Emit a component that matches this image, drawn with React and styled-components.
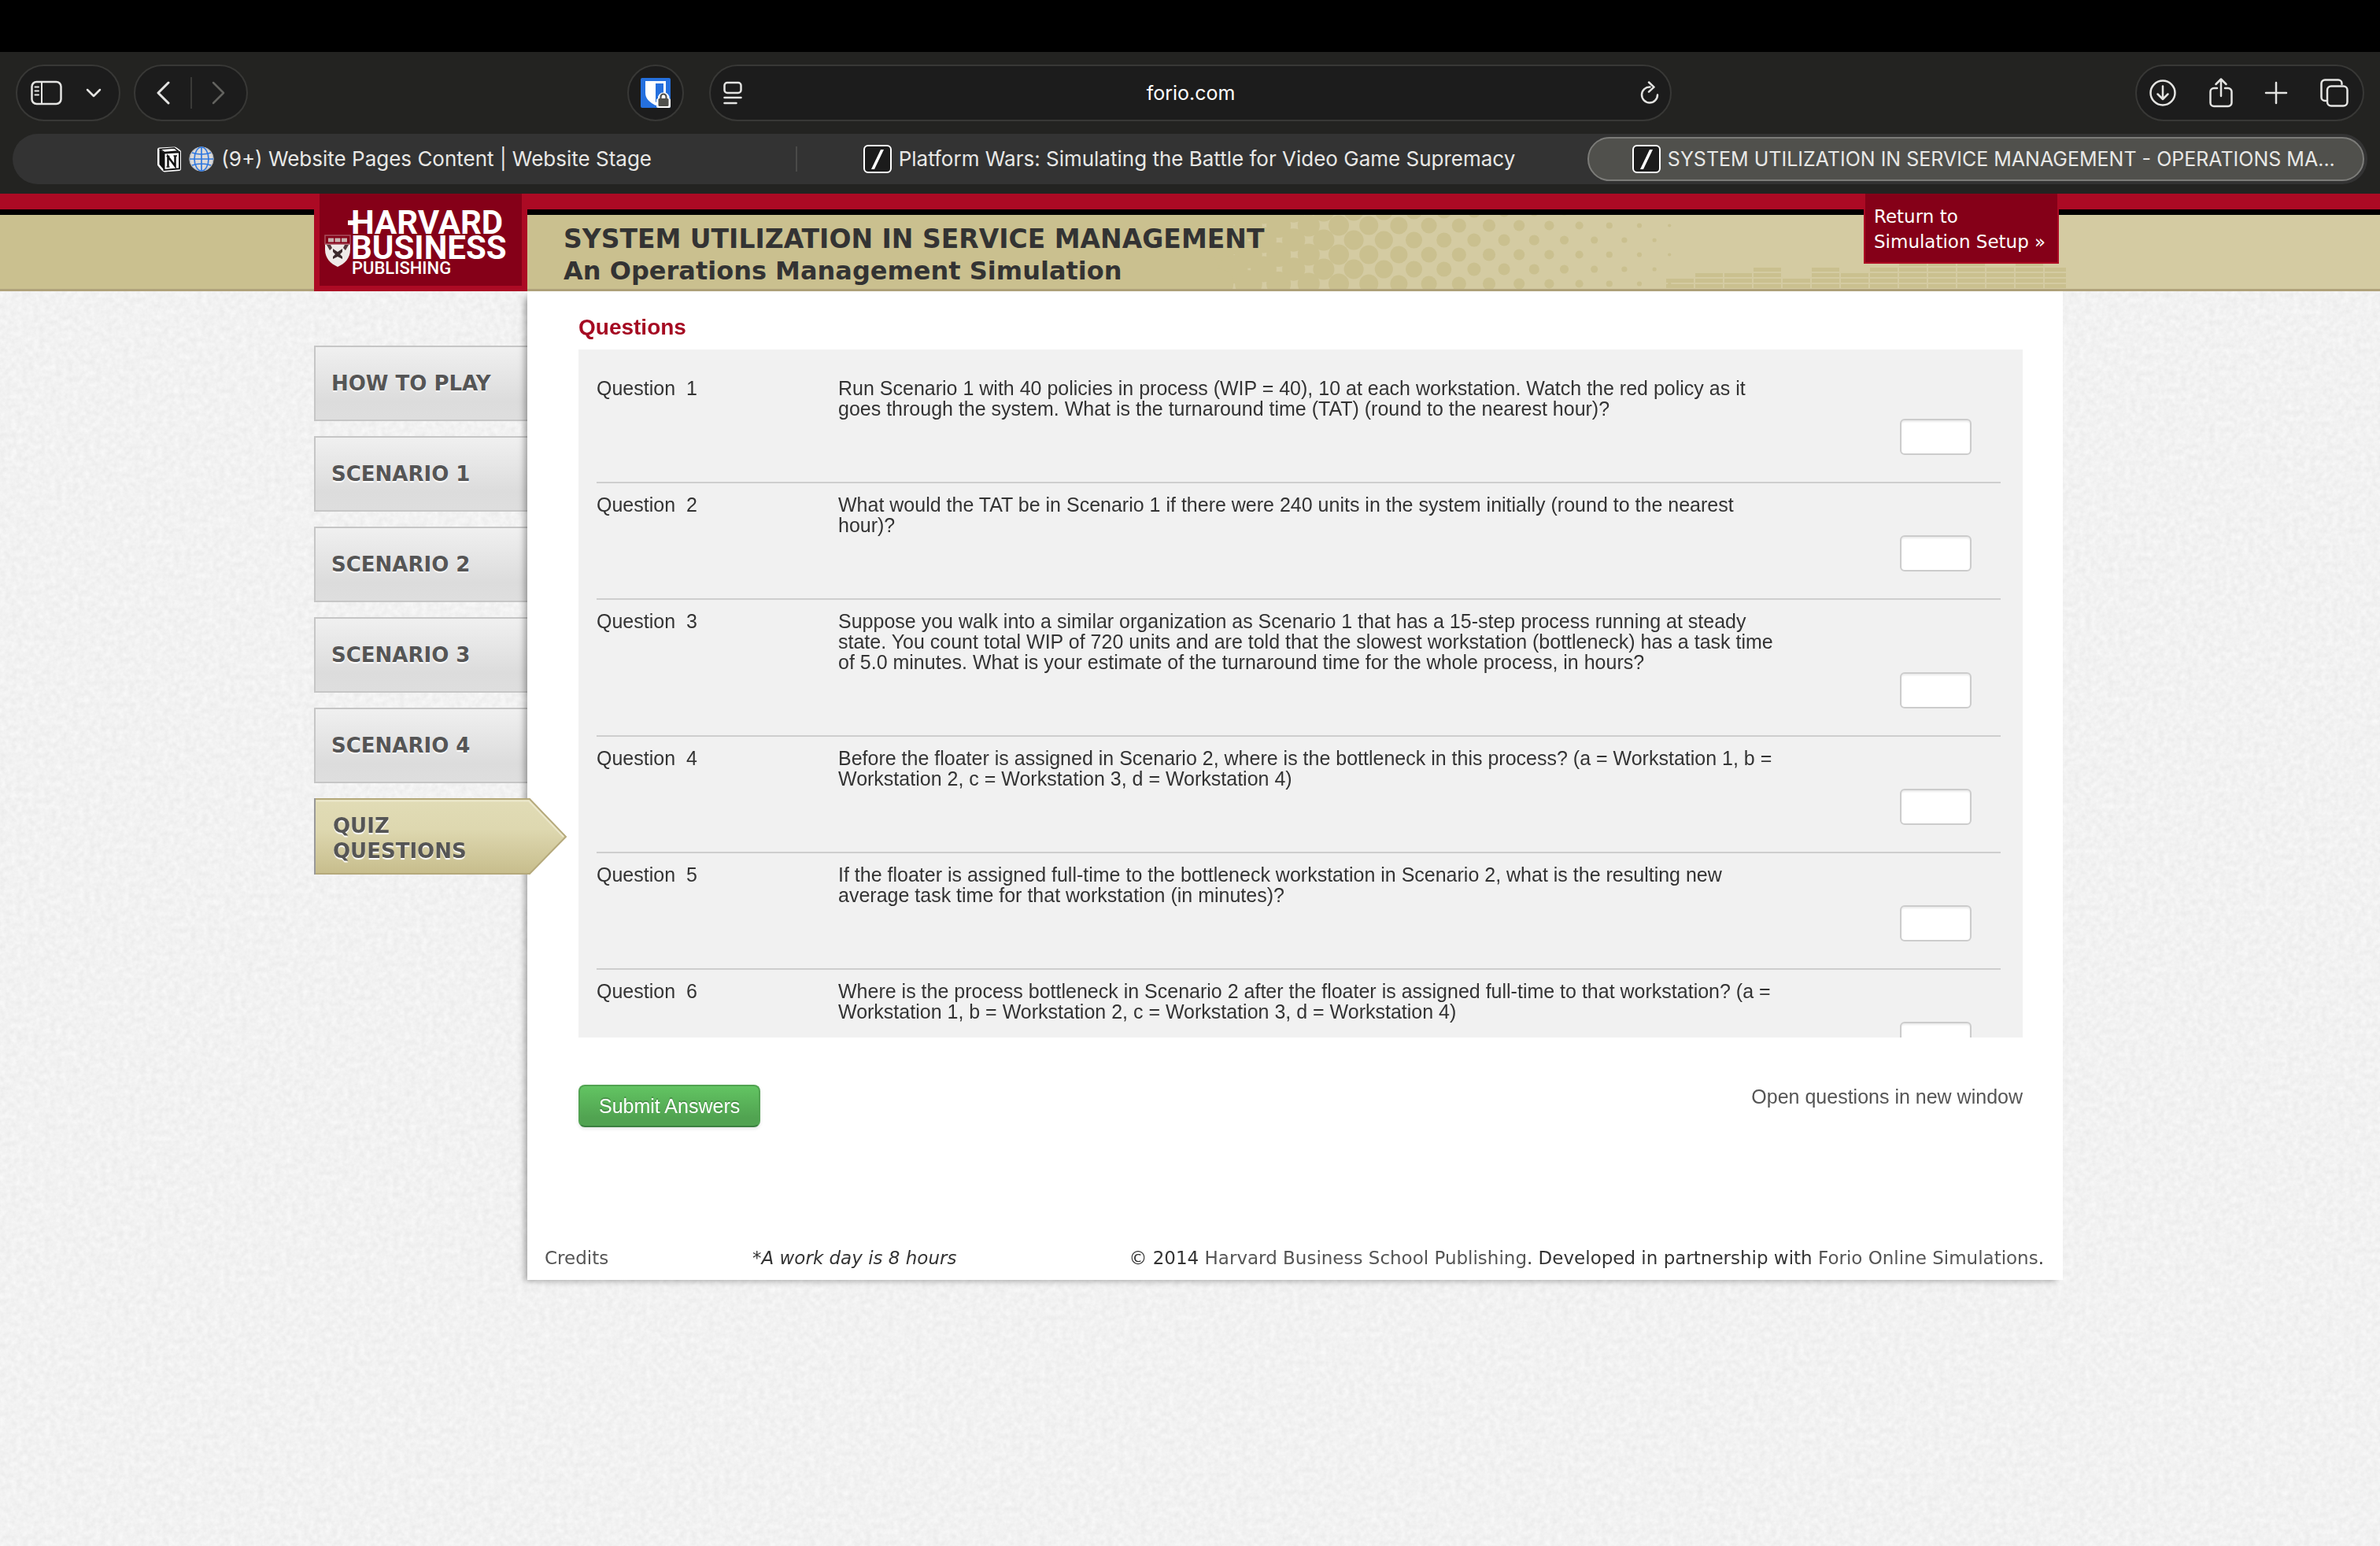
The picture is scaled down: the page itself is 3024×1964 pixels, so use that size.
import React, { useState } from "react";
import styled, { createGlobalStyle, css } from "styled-components";

const questions = [
  "Run Scenario 1 with 40 policies in process (WIP = 40), 10 at each workstation. Watch the red policy as it goes through the system. What is the turnaround time (TAT) (round to the nearest hour)?",
  "What would the TAT be in Scenario 1 if there were 240 units in the system initially (round to the nearest hour)?",
  "Suppose you walk into a similar organization as Scenario 1 that has a 15-step process running at steady state. You count total WIP of 720 units and are told that the slowest workstation (bottleneck) has a task time of 5.0 minutes. What is your estimate of the turnaround time for the whole process, in hours?",
  "Before the floater is assigned in Scenario 2, where is the bottleneck in this process? (a = Workstation 1, b = Workstation 2, c = Workstation 3, d = Workstation 4)",
  "If the floater is assigned full-time to the bottleneck workstation in Scenario 2, what is the resulting new average task time for that workstation (in minutes)?",
  "Where is the process bottleneck in Scenario 2 after the floater is assigned full-time to that workstation? (a = Workstation 1, b = Workstation 2, c = Workstation 3, d = Workstation 4)",
];

const steps = ["HOW TO PLAY", "SCENARIO 1", "SCENARIO 2", "SCENARIO 3", "SCENARIO 4"];

// number of lit blocks in each column of the header equalizer
const levels = [2, 3, 3, 4, 2, 4, 3, 4, 5, 5, 5, 4, 5, 4];

const App = () => {
  const [answers, setAnswers] = useState({});

  const handleChange = (i, value) => setAnswers({ ...answers, [i]: value });

  return (
    <Page>
      <GlobalStyle />
      <Paper />
      <Browser />
      <Header />
      <Wrapper>
        <Nav>
          {steps.map((step) => (
            <NavItem key={step} href="#">
              {step}
            </NavItem>
          ))}
          <ActiveItem href="#">
            <Arrow />
            <ActiveLabel>QUIZ QUESTIONS</ActiveLabel>
          </ActiveItem>
        </Nav>
        <Main>
          <Heading>Questions</Heading>
          <QuestionList>
            {questions.map((text, i) => (
              <Question key={i}>
                <QuestionLabel htmlFor={`answer-${i}`}>Question&nbsp; {i + 1}</QuestionLabel>
                <div>{text}</div>
                <Answer
                  id={`answer-${i}`}
                  type="text"
                  value={answers[i] || ""}
                  onChange={(e) => handleChange(i, e.target.value)}
                />
              </Question>
            ))}
          </QuestionList>
          <Actions>
            <Submit type="button">Submit Answers</Submit>
            <OpenLink href="#">Open questions in new window</OpenLink>
          </Actions>
          <Footer>
            <Credits>
              <a href="#">Credits</a>
            </Credits>
            <em>*A work day is 8 hours</em>
            <Copyright>
              © 2014 <a href="#">Harvard Business School Publishing</a>. Developed in partnership
              with <a href="#">Forio Online Simulations</a>.
            </Copyright>
          </Footer>
        </Main>
      </Wrapper>
    </Page>
  );
};

export default App;

const Browser = () => (
  <>
    <MenuBar />
    <Chrome>
      <Toolbar>
        <ToolbarSide>
          <Pill $width={133} $pad="0 22px 0 17px">
            <IconButton aria-label="Show sidebar">
              <Icon width="40" height="32" viewBox="0 0 40 32">
                <rect x="1.5" y="2" width="37" height="28" rx="6" />
                <path d="M14 2v28M5.5 8.5h4.5M5.5 13.5h4.5M5.5 18.5h4.5" strokeWidth="2" />
              </Icon>
            </IconButton>
            <IconButton aria-label="Tab groups">
              <Icon width="20" height="12" viewBox="0 0 20 12">
                <path d="M2 2l8 8 8-8" />
              </Icon>
            </IconButton>
          </Pill>
          <Pill $width={145} $pad="0 26px">
            <IconButton aria-label="Back">
              <Icon width="18" height="30" viewBox="0 0 18 30">
                <path d="M16 2L3 15l13 13" strokeWidth="3" />
              </Icon>
            </IconButton>
            <PillDivider />
            <IconButton aria-label="Forward" $dim>
              <Icon width="18" height="30" viewBox="0 0 18 30">
                <path d="M2 2l13 13L2 28" />
              </Icon>
            </IconButton>
          </Pill>
          <Extension>
            <IconButton aria-label="Bitwarden">
              <Bitwarden />
            </IconButton>
          </Extension>
        </ToolbarSide>
        <Address>
          <IconButton aria-label="Page menu">
            <Icon width="24" height="30" viewBox="0 0 24 30">
              <rect x="1.5" y="2" width="21" height="13" rx="3.5" />
              <path d="M1.5 21h21M1.5 28h15" />
            </Icon>
          </IconButton>
          <Domain>forio.com</Domain>
          <IconButton aria-label="Reload">
            <Icon width="26" height="30" viewBox="0 0 26 30">
              <path d="M13.5 7.5A10 10 0 1 0 23 17.5" />
              <path d="M12 1.5l6.5 6.2-6.5 6" />
            </Icon>
          </IconButton>
        </Address>
        <ToolbarSide $end>
          <Pill $width={291} $pad="0 17px 0 15px">
            <IconButton aria-label="Downloads">
              <Icon width="36" height="36" viewBox="0 0 36 36">
                <circle cx="18" cy="18" r="15.5" />
                <path d="M18 9.5v16M11.5 19.5l6.5 6.5 6.5-6.5" />
              </Icon>
            </IconButton>
            <IconButton aria-label="Share">
              <Icon width="32" height="40" viewBox="0 0 32 40">
                <path d="M11 14H7a4.5 4.5 0 0 0-4.5 4.5v14A4.5 4.5 0 0 0 7 37h18a4.5 4.5 0 0 0 4.5-4.5v-14A4.5 4.5 0 0 0 25 14h-4M16 24V3M9.5 9L16 2.5 22.5 9" />
              </Icon>
            </IconButton>
            <IconButton aria-label="New tab">
              <Icon width="30" height="30" viewBox="0 0 30 30">
                <path d="M15 2v26M2 15h26" />
              </Icon>
            </IconButton>
            <IconButton aria-label="Tab overview">
              <Icon width="38" height="38" viewBox="0 0 38 38">
                <rect x="10" y="10.5" width="25.5" height="25" rx="5" />
                <path d="M8 29H7a4.5 4.5 0 0 1-4.5-4.5V7A4.5 4.5 0 0 1 7 2.5h17A4.5 4.5 0 0 1 28.5 7v1" />
              </Icon>
            </IconButton>
          </Pill>
        </ToolbarSide>
      </Toolbar>
      <Tabs>
        <Tab>
          <Notion />
          <Globe />
          <TabTitle>(9+) Website Pages Content | Website Stage</TabTitle>
        </Tab>
        <TabDivider />
        <Tab>
          <Forio />
          <TabTitle>Platform Wars: Simulating the Battle for Video Game Supremacy</TabTitle>
        </Tab>
        <ActiveTab>
          <Forio />
          <TabTitle>SYSTEM UTILIZATION IN SERVICE MANAGEMENT - OPERATIONS MA...</TabTitle>
        </ActiveTab>
      </Tabs>
    </Chrome>
  </>
);

const Header = () => (
  <Banner>
    <BannerInner>
      <Halftone />
      <Equalizer />
      <Logo href="#">
        <Shield />
        <LogoText>
          <LogoLine $cross>HARVARD</LogoLine>
          <LogoLine>BUSINESS</LogoLine>
          <LogoSmall>PUBLISHING</LogoSmall>
        </LogoText>
      </Logo>
      <Titles>
        <Title>SYSTEM UTILIZATION IN SERVICE MANAGEMENT</Title>
        <Subtitle>An Operations Management Simulation</Subtitle>
      </Titles>
      <ReturnLink href="#">
        Return to
        <br />
        Simulation Setup »
      </ReturnLink>
    </BannerInner>
  </Banner>
);

// grainy paper behind the whole page
const Paper = () => (
  <PaperSvg aria-hidden="true">
    <filter id="grain" x="0" y="0" width="100%" height="100%" colorInterpolationFilters="sRGB">
      <feTurbulence type="fractalNoise" baseFrequency="0.14" numOctaves="3" seed="4" />
      <feColorMatrix values="0.07 0 0 0 0.913  0.07 0 0 0 0.913  0.07 0 0 0 0.913  0 0 0 0 1" />
    </filter>
    <rect width="100%" height="100%" filter="url(#grain)" />
  </PaperSvg>
);

// dots grow until they merge into the solid colour on the left
const Halftone = () => {
  const dots = [];
  for (let row = 0; row < 6; row++) {
    for (let col = -1; col < 16; col++) {
      const x = col * 38.2 + (row % 2 ? 8.2 : 27.3);
      const y = -5 + row * 18.5;
      const r = 17.2 - x * 0.026 + Math.max(0, 110 - x) * 0.02;
      if (r > 2) dots.push(<circle key={`${row}-${col}`} cx={x} cy={y} r={r} />);
    }
  }
  return (
    <HalftoneSvg viewBox="0 0 620 94" aria-hidden="true">
      <rect width="620" height="94" fill="#d4cba2" />
      <g fill="#cac08f">{dots}</g>
    </HalftoneSvg>
  );
};

const Equalizer = () => (
  <EqualizerSvg viewBox="0 0 508 34" aria-hidden="true">
    {levels.map((level, col) =>
      Array.from({ length: level }, (_, i) => (
        <rect key={`${col}-${i}`} x={col * 37} y={28 - i * 7} width={col === 13 ? 27 : 35} height="5" />
      ))
    )}
  </EqualizerSvg>
);

const Arrow = () => (
  <ArrowSvg viewBox="0 0 322 98" aria-hidden="true">
    <defs>
      <linearGradient id="gold" x1="0" y1="0" x2="0" y2="1">
        <stop offset="0" stopColor="#e1dcb6" />
        <stop offset="0.4" stopColor="#ded8b0" />
        <stop offset="1" stopColor="#c7bd8c" />
      </linearGradient>
    </defs>
    <path d="M1 1h273l46 48-46 47H1z" fill="url(#gold)" stroke="#b5a97b" strokeWidth="2" />
    <path d="M3 3.5h270l44 45.5" fill="none" stroke="#ece8cc" strokeWidth="2" />
    <path d="M1 0v97" stroke="#999" strokeWidth="2" />
  </ArrowSvg>
);

const Shield = () => (
  <ShieldSvg width="34" height="42" viewBox="0 0 34 42" aria-hidden="true">
    <path d="M1 1h32v18c0 11-7 18-16 22C8 37 1 30 1 19z" fill="#efeae8" />
    <path d="M1 1h32v11H1z" fill="#850018" stroke="#a8505e" strokeWidth="1.5" />
    <path d="M5 4.5h7v5H5zM13.5 4.5h7v5h-7zM22 4.5h7v5h-7z" fill="#c9b3b0" />
    <path d="M3 13h5l2 4-3 3zM31 13h-5l-2 4 3 3z" fill="#55383c" />
    <path d="M11 18l6 4 6-4v4l-3 3 3 3v3l-6-3-6 3v-3l3-3-3-3z" fill="#3c2a2c" />
  </ShieldSvg>
);

const Bitwarden = () => (
  <svg width="38" height="38" viewBox="0 0 38 38" aria-hidden="true">
    <rect width="38" height="38" rx="2" fill="#2570de" />
    <path d="M6 4h26v15c0 8-6 12-13 16C12 31 6 27 6 19z" fill="#fff" />
    <path d="M19 7h10v12c0 5-4 8-10 12z" fill="#2570de" />
    <path
      d="M22 26v-2a7.500 7.500 0 0 1 14.500 0v2c1 .5 1.500 1 1.500 2v8a2 2 0 0 1-2 2H22a2 2 0 0 1-2-2v-8c0-1 1-2 2-2z"
      fill="#fff"
    />
    <path d="M25.500 27v-3a3.500 3.500 0 0 1 7 0v3" fill="none" stroke="#50504c" strokeWidth="2.200" />
    <rect x="22.500" y="26" width="13" height="10" rx="1.500" fill="#50504c" />
  </svg>
);

const Notion = () => (
  <svg width="32" height="33" viewBox="0 0 32 33" aria-hidden="true">
    <path
      d="M3.500 1.500L23 0.500c1.500 0 7 4 8 5.500v22.500c0 1.500-1 2.500-2.500 2.500L10 32.500c-2 0-8-7-9-9V4c0-1.500 1-2.500 2.500-2.500z"
      fill="#fff"
    />
    <path d="M3.500 3.500l6 4.500v22L3.500 23z" fill="#111" />
    <path d="M4.500 3.500L22.500 2l5 4-17.500 1.500z" fill="#fff" stroke="#111" strokeWidth="1.500" />
    <path d="M9.500 8.500L29 7.300v21L9.500 30z" fill="#fff" stroke="#111" strokeWidth="2" />
    <path d="M14.500 25.500V13l9 12V12" fill="none" stroke="#111" strokeWidth="2.500" />
    <path d="M12.500 12.500h4M21.500 12h4.500M12.500 26h4" stroke="#111" strokeWidth="1.500" />
  </svg>
);

const Globe = () => (
  <svg width="32" height="32" viewBox="0 0 32 32" aria-hidden="true">
    <circle cx="16" cy="16" r="15.500" fill="#dcdad8" />
    <g fill="none" stroke="#2f78e0" strokeWidth="1.700">
      <circle cx="16" cy="16" r="15" stroke="#a9b0ba" strokeWidth="1" />
      <ellipse cx="16" cy="16" rx="9" ry="15" />
      <path d="M16 1v30M1 16h30M4 8q12 4 24 0M4 24q12-4 24 0" />
    </g>
  </svg>
);

const Forio = () => (
  <svg width="36" height="36" viewBox="0 0 36 36" aria-hidden="true">
    <rect x="1" y="1" width="34" height="34" rx="5" fill="#1b1b1b" stroke="#fff" strokeWidth="2" />
    <path d="M22 6h4L14 31h-4z" fill="#fff" />
  </svg>
);

const GlobalStyle = createGlobalStyle`
  * {
    box-sizing: border-box;
  }
  body {
    margin: 0;
    background: #f1f1f1;
    color: #333;
    font-family: "Liberation Sans", Arial, sans-serif;
    font-size: 25px;
    line-height: 26px;
  }
  a {
    color: #555;
    text-decoration: none;
  }
  button {
    font: inherit;
    border: 0;
    cursor: pointer;
  }
`;

const Page = styled.div`
  position: relative;
  min-height: 100vh;
`;

const PaperSvg = styled.svg`
  position: absolute;
  inset: 0;
  z-index: -1;
  width: 100%;
  height: 100%;
`;

const MenuBar = styled.div`
  height: 66px;
  background: #000;
`;

const Chrome = styled.div`
  padding: 16px 16px 12px;
  background: #232321;
  color: #e8e8e6;
  font-family: Inter, sans-serif;
`;

const Toolbar = styled.div`
  display: grid;
  grid-template-columns: 1fr minmax(0, 1223px) 1fr;
  padding: 0 4px;
  margin-bottom: 16px;
`;

const ToolbarSide = styled.div`
  display: flex;
  gap: 17px;
  justify-content: ${(props) => (props.$end ? "flex-end" : "flex-start")};
`;

const capsule = css`
  display: flex;
  align-items: center;
  justify-content: space-between;
  height: 72px;
  background: #1c1c1c;
  border: 2px solid #383836;
  border-radius: 36px;
`;

const Pill = styled.div`
  ${capsule}
  width: ${(props) => props.$width}px;
  padding: ${(props) => props.$pad};
`;

const Extension = styled.div`
  ${capsule}
  width: 72px;
  justify-content: center;
  margin: 0 32px 0 auto;
`;

const Address = styled.div`
  ${capsule}
  padding: 0 12px 0 16px;
`;

const Domain = styled.span`
  color: #fff;
  font-size: 25px;
`;

const IconButton = styled.button`
  display: flex;
  padding: 0;
  background: none;
  color: ${(props) => (props.$dim ? "#63635f" : "#e4e4e2")};
`;

const Icon = styled.svg`
  fill: none;
  stroke: currentColor;
  stroke-width: 2.5;
  stroke-linecap: round;
  stroke-linejoin: round;
`;

const PillDivider = styled.span`
  width: 2px;
  height: 40px;
  background: #3a3a38;
`;

const Tabs = styled.div`
  display: grid;
  grid-template-columns: 1fr 2px 1fr 1fr;
  align-items: center;
  height: 64px;
  padding-right: 4px;
  background: #333;
  border-radius: 32px;
`;

const Tab = styled.div`
  display: flex;
  align-items: center;
  justify-content: center;
  gap: 9px;
  min-width: 0;
  height: 56px;
  font-size: 26px;
`;

const ActiveTab = styled(Tab)`
  margin-left: 8px;
  padding-left: 20px;
  background: #50504c;
  border: 2px solid #7c7c79;
  border-radius: 28px;
  font-size: 25px;
`;

const TabTitle = styled.span`
  overflow: hidden;
  line-height: 32px;
  white-space: nowrap;
`;

const TabDivider = styled.span`
  height: 32px;
  background: #4a4a48;
`;

const Banner = styled.header`
  height: 124px;
  background: linear-gradient(
    to bottom,
    #ac0a24 20px,
    #000 20px,
    #000 27px,
    transparent 27px,
    transparent 121px,
    #b0a27a 121px
  ),
  linear-gradient(to right, #cac08f 60%, #d4cba2 60%);
`;

const BannerInner = styled.div`
  position: relative;
  display: flex;
  align-items: flex-start;
  max-width: 2226px;
  margin: 0 auto;
  padding-right: 9px;
`;

const HalftoneSvg = styled.svg`
  position: absolute;
  top: 27px;
  right: 465px;
  width: 620px;
  height: 94px;
`;

const EqualizerSvg = styled.svg`
  position: absolute;
  top: 87px;
  right: 0;
  width: 508px;
  height: 34px;
  fill: #cac08f;
`;

const Logo = styled.a`
  display: flex;
  align-items: center;
  width: 271px;
  height: 124px;
  padding: 0 6px;
  background: #850018;
  border: solid #ac0a24;
  border-width: 0 7px 7px;
  color: #fff;
  font-family: Roboto, sans-serif;
`;

const ShieldSvg = styled.svg`
  flex: none;
  margin-top: 28px;
`;

const LogoText = styled.span`
  display: flex;
  flex-direction: column;
  padding-top: 8px;
`;

const LogoLine = styled.span`
  position: relative;
  font-size: 42px;
  font-weight: 700;
  line-height: 32px;

  ${(props) =>
    props.$cross &&
    css`
      &::before {
        content: "";
        position: absolute;
        top: 13px;
        left: -4px;
        width: 10px;
        height: 6px;
        background: #fff;
      }
    `}
`;

const LogoSmall = styled.span`
  padding-left: 1px;
  font-size: 22px;
  font-weight: 500;
  line-height: 20px;
`;

const Titles = styled.div`
  position: relative;
  flex: 1;
  padding: 38px 0 0 46px;
  font-family: "DejaVu Sans", Verdana, sans-serif;
  font-weight: 700;
  line-height: 40px;
`;

const Title = styled.h1`
  margin: 0;
  font-size: 33px;
`;

const Subtitle = styled.p`
  margin: 0;
  font-size: 32px;
`;

const ReturnLink = styled.a`
  position: relative;
  width: 248px;
  height: 89px;
  padding: 13px 11px;
  background: #850018;
  border: solid #ac0a24;
  border-width: 0 2px 2px;
  color: #fff;
  font-family: "DejaVu Sans", Verdana, sans-serif;
  font-size: 23px;
  line-height: 32px;
  white-space: nowrap;
`;

const Wrapper = styled.div`
  display: flex;
  align-items: flex-start;
  max-width: 2226px;
  margin: 0 auto;
  padding-right: 4px;
`;

const Nav = styled.nav`
  display: flex;
  flex-direction: column;
  gap: 19px;
  width: 271px;
  padding-top: 69px;
  font-family: "DejaVu Sans", Verdana, sans-serif;
  font-size: 26px;
  font-weight: 700;
  line-height: 32px;
  text-shadow: 0 2px 1px #fff;
`;

const NavItem = styled.a`
  display: flex;
  align-items: center;
  height: 96px;
  padding-left: 20px;
  background: linear-gradient(#f0f0f0, #dcdcdc 75%, #dedede);
  border: solid #c6c6c6;
  border-width: 2px 0 2px 2px;
`;

const ActiveItem = styled.a`
  position: relative;
  z-index: 2;
  display: flex;
  align-items: center;
  width: 322px;
  height: 98px;
  padding: 4px 0 0 24px;
`;

const ArrowSvg = styled.svg`
  position: absolute;
  inset: 0;
  width: 100%;
  height: 100%;
`;

const ActiveLabel = styled.span`
  position: relative;
  width: 200px;
`;

const Main = styled.main`
  position: relative;
  z-index: 1;
  flex: 1;
  min-width: 0;
  padding-top: 29px;
  background: #fff;
  box-shadow: -6px 4px 8px -3px rgba(0, 0, 0, 0.35);
`;

const Heading = styled.h2`
  margin: 0 65px 11px;
  color: #a50a22;
  font-size: 28px;
  line-height: 34px;
`;

const QuestionList = styled.div`
  height: 874px;
  margin: 0 51px 0 65px;
  padding: 22px 28px 0 23px;
  overflow-y: auto;
  scrollbar-width: none;
  background: #f1f1f1;
`;

const Question = styled.div`
  display: grid;
  grid-template-columns: 307px minmax(0, 1200px) 1fr;
  padding: 14px 0 34px;
  border-bottom: 2px solid #cecece;
`;

const QuestionLabel = styled.label`
  white-space: nowrap;
`;

const Answer = styled.input`
  grid-column: 3;
  grid-row: 2;
  justify-self: end;
  width: 91px;
  height: 46px;
  margin-right: 37px;
  padding: 4px 8px;
  background: #fff;
  border: 2px solid #ccc;
  border-radius: 6px;
  box-shadow: inset 0 2px 2px rgba(0, 0, 0, 0.08);
  font: inherit;
`;

const Actions = styled.div`
  display: flex;
  align-items: flex-start;
  justify-content: space-between;
  margin: 60px 51px 0 65px;
`;

const Submit = styled.button`
  height: 54px;
  padding: 0 24px;
  background: linear-gradient(#62c462, #51a351 80%);
  border: 2px solid #51a351;
  border-bottom-color: #3b8040;
  border-radius: 8px;
  box-shadow: 0 2px 4px rgba(0, 0, 0, 0.1);
  color: #fff;
  text-shadow: 0 -2px 0 rgba(0, 0, 0, 0.2);
`;

const OpenLink = styled.a`
  line-height: 30px;
`;

const Footer = styled.footer`
  display: flex;
  margin-top: 150px;
  padding: 0 24px 12px 22px;
  font-family: "DejaVu Sans", Verdana, sans-serif;
  font-size: 23px;
  line-height: 32px;
`;

const Credits = styled.span`
  width: 264px;
`;

const Copyright = styled.span`
  margin-left: auto;
`;
